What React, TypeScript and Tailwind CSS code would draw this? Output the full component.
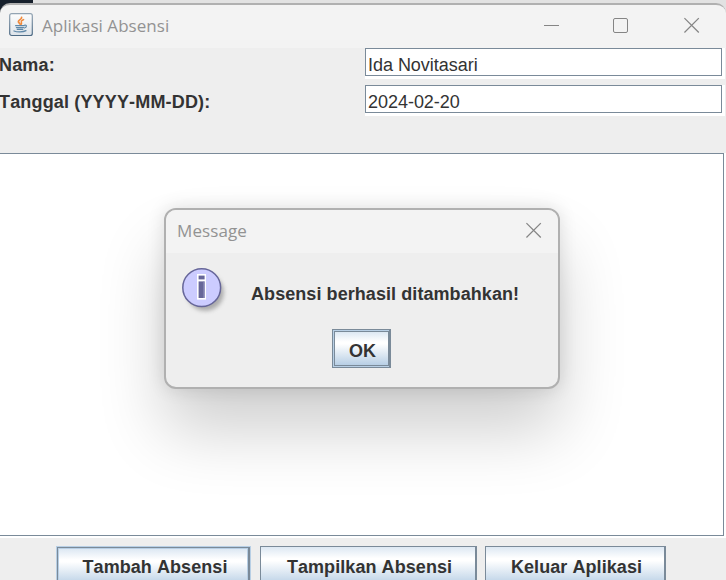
import React from "react";

function JavaIcon() {
  return (
    <svg className="block h-6 w-6" viewBox="0 0 24 24" fill="none">
      <defs>
        <linearGradient id="javaTile" x1="0" y1="0" x2="0" y2="1">
          <stop offset="0" stopColor="#fdfdfd" />
          <stop offset="1" stopColor="#dde3e9" />
        </linearGradient>
        <linearGradient id="javaEdge" x1="0" y1="0" x2="0" y2="1">
          <stop offset="0" stopColor="#93a4b3" />
          <stop offset="1" stopColor="#4e6b85" />
        </linearGradient>
      </defs>
      <rect x="0.7" y="0.7" width="22.6" height="21.8" rx="2" fill="url(#javaTile)" stroke="url(#javaEdge)" strokeWidth="1.2" />
      <path d="M12.6 4.4c.6 1.8-3.6 2.6-3.2 4.4.2 1 1.3 1.4 1.8 2.4" stroke="#f08a3c" strokeWidth="1.8" strokeLinecap="round" />
      <path d="M14.6 6.6c-1.6.8-2.8 1.3-2.4 2.4.3.8.8 1.1 0 2.2" stroke="#f08a3c" strokeWidth="1.5" strokeLinecap="round" />
      <path d="M6.6 12.7h8.6M7.4 14.6h7.2M8.2 16.3h5.6" stroke="#5f88a8" strokeWidth="1.2" strokeLinecap="round" />
      <path d="M15.4 12.2c2.6-.6 2.8 2 .1 2.8" stroke="#5f88a8" strokeWidth="1.1" strokeLinecap="round" />
      <path d="M5 18c3.2 1.3 9 1.2 12-.3" stroke="#5f88a8" strokeWidth="1.3" strokeLinecap="round" />
    </svg>
  );
}

function CloseIcon() {
  return (
    <svg className="block h-4 w-4" viewBox="0 0 16 16" stroke="#858585" strokeWidth="1.3" fill="none">
      <path d="M.4 1.1l14.4 14.4M14.8 1.1L.4 15.5" />
    </svg>
  );
}

function InfoIcon() {
  return (
    <svg className="block h-12 w-12" viewBox="0 0 48 48">
      <defs>
        <filter id="infoShadow" x="-20%" y="-20%" width="150%" height="150%">
          <feGaussianBlur stdDeviation="2" />
        </filter>
      </defs>
      <circle cx="23.3" cy="25.3" r="18.5" fill="#808080" opacity="0.6" filter="url(#infoShadow)" />
      <circle cx="19.7" cy="20.7" r="18.9" fill="#ccccff" stroke="#666699" strokeWidth="1.5" />
      <rect x="15" y="7" width="9" height="25.6" fill="#fff" />
      <rect x="16.6" y="8.6" width="6" height="3.8" fill="#666699" />
      <rect x="16.6" y="14.4" width="6" height="16.6" fill="#666699" />
      <path d="M21.4 14.4h1.2v16.6h-1.2z" fill="#8f8fbd" />
    </svg>
  );
}

function Field({ label, value }: { label: string; value: string }) {
  return (
    <div className="flex h-[31px]">
      <div className="w-[365px] pt-[3px] text-[18px] leading-7 font-bold tracking-[0.16px] whitespace-nowrap [font-kerning:none] -indent-[1px]">{label}</div>
      <div className="w-[360px] bg-white">
        <div className="h-[28px] w-[357px] border border-[#7a8a99] bg-white pt-[2px] pl-[2px] text-[18px] leading-7 tracking-[-0.03px] whitespace-nowrap">{value}</div>
      </div>
    </div>
  );
}

const metal = "bg-[linear-gradient(180deg,#dde8f3_0%,#ffffff_30%,#ffffff_36%,#b8cfe5_100%)]";

export default function App() {
  return (
    <div className="relative h-[580px] w-[726px] overflow-hidden bg-[#eeeeee] font-['Liberation_Sans',Arial,sans-serif] text-[#333333]">
      <div className="flex h-12 bg-[linear-gradient(90deg,#17202c_33px,#e2e2e2_33px)] pt-[3px]">
        <div className="flex w-[726px] items-start rounded-t-[10px] border-t-2 border-[#b0b0b0] bg-[#f3f3f3]">
          <div className="mt-2 ml-[9px]"><JavaIcon /></div>
          <div className="mt-[7px] ml-[9px] font-['Open_Sans',sans-serif] text-[17px] leading-7 tracking-[0.05px] whitespace-nowrap text-[#929292]">Aplikasi Absensi</div>
          <div className="mt-5 ml-auto h-px w-[15px] bg-[#858585]" />
          <div className="mt-[13px] ml-[54px] h-[15px] w-[15px] rounded-[2px] border border-[#858585]" />
          <div className="mt-[12px] mr-[26px] ml-[56px]"><CloseIcon /></div>
        </div>
      </div>

      <div className="flex h-[105px] flex-col gap-[6px]">
        <Field label="Nama:" value="Ida Novitasari" />
        <Field label="Tanggal (YYYY-MM-DD):" value="2024-02-20" />
      </div>

      <div className="h-[385px] w-[726px] bg-white">
        <div className="h-[383px] w-[724px] border-y border-r border-[#7a8a99]" />
      </div>

      <div className="flex h-[42px] gap-[9px] pt-2 pl-[56px] text-[18px] font-bold tracking-[0.07px] [font-kerning:none]">
        <button className="flex h-10 w-[195px] flex-col border border-[#b8cfe5] whitespace-nowrap">
          <div className="h-full w-full border-t border-r-2 border-l border-[#7a8a99]">
            <div className={`h-full border border-b-0 border-[#b8cfe5] pt-1 pl-1 leading-7 ${metal}`}>Tambah Absensi</div>
          </div>
        </button>
        <button className={`flex h-10 w-[217px] items-start justify-center border border-r-2 border-[#7a8a99] pt-[6px] pl-[3px] leading-7 whitespace-nowrap ${metal}`}>Tampilkan Absensi</button>
        <button className={`-ml-px flex h-10 w-[181px] items-start justify-center border border-r-2 border-[#7a8a99] pt-[6px] pl-[3px] leading-7 whitespace-nowrap ${metal}`}>Keluar Aplikasi</button>
      </div>

      <div className="absolute top-[208px] left-[164px] h-[181px] w-[396px] rounded-[12px] border-2 border-[#b0b0b0] bg-[#eeeeee] shadow-[0_42px_66px_rgba(0,0,0,0.19),0_0_18px_rgba(0,0,0,0.12)]">
        <div className="flex h-[43px] items-start justify-between rounded-t-[10px] bg-[#f3f3f3] pr-[16px] pl-[11px]">
          <div className="mt-[7px] font-['Open_Sans',sans-serif] text-[17px] leading-7 tracking-[0.1px] text-[#929292]">Message</div>
          <div className="mt-[12px]"><CloseIcon /></div>
        </div>
        <div className="flex h-[76px] pt-[14px] pl-[16px]">
          <InfoIcon />
          <div className="mt-[13px] ml-[21px] text-[18px] leading-7 font-bold tracking-[0.07px] whitespace-nowrap [font-kerning:none]">Absensi berhasil ditambahkan!</div>
        </div>
        <button className="ml-[166px] block h-[39px] w-[59px] border border-r-2 border-[#7a8a99] bg-[#b8cfe5] p-px pr-0 text-[18px] font-bold">
          <div className={`flex h-full justify-center border border-[#7a8a99] pt-[5px] pl-0.5 leading-7 ${metal}`}>OK</div>
        </button>
      </div>
    </div>
  );
}
